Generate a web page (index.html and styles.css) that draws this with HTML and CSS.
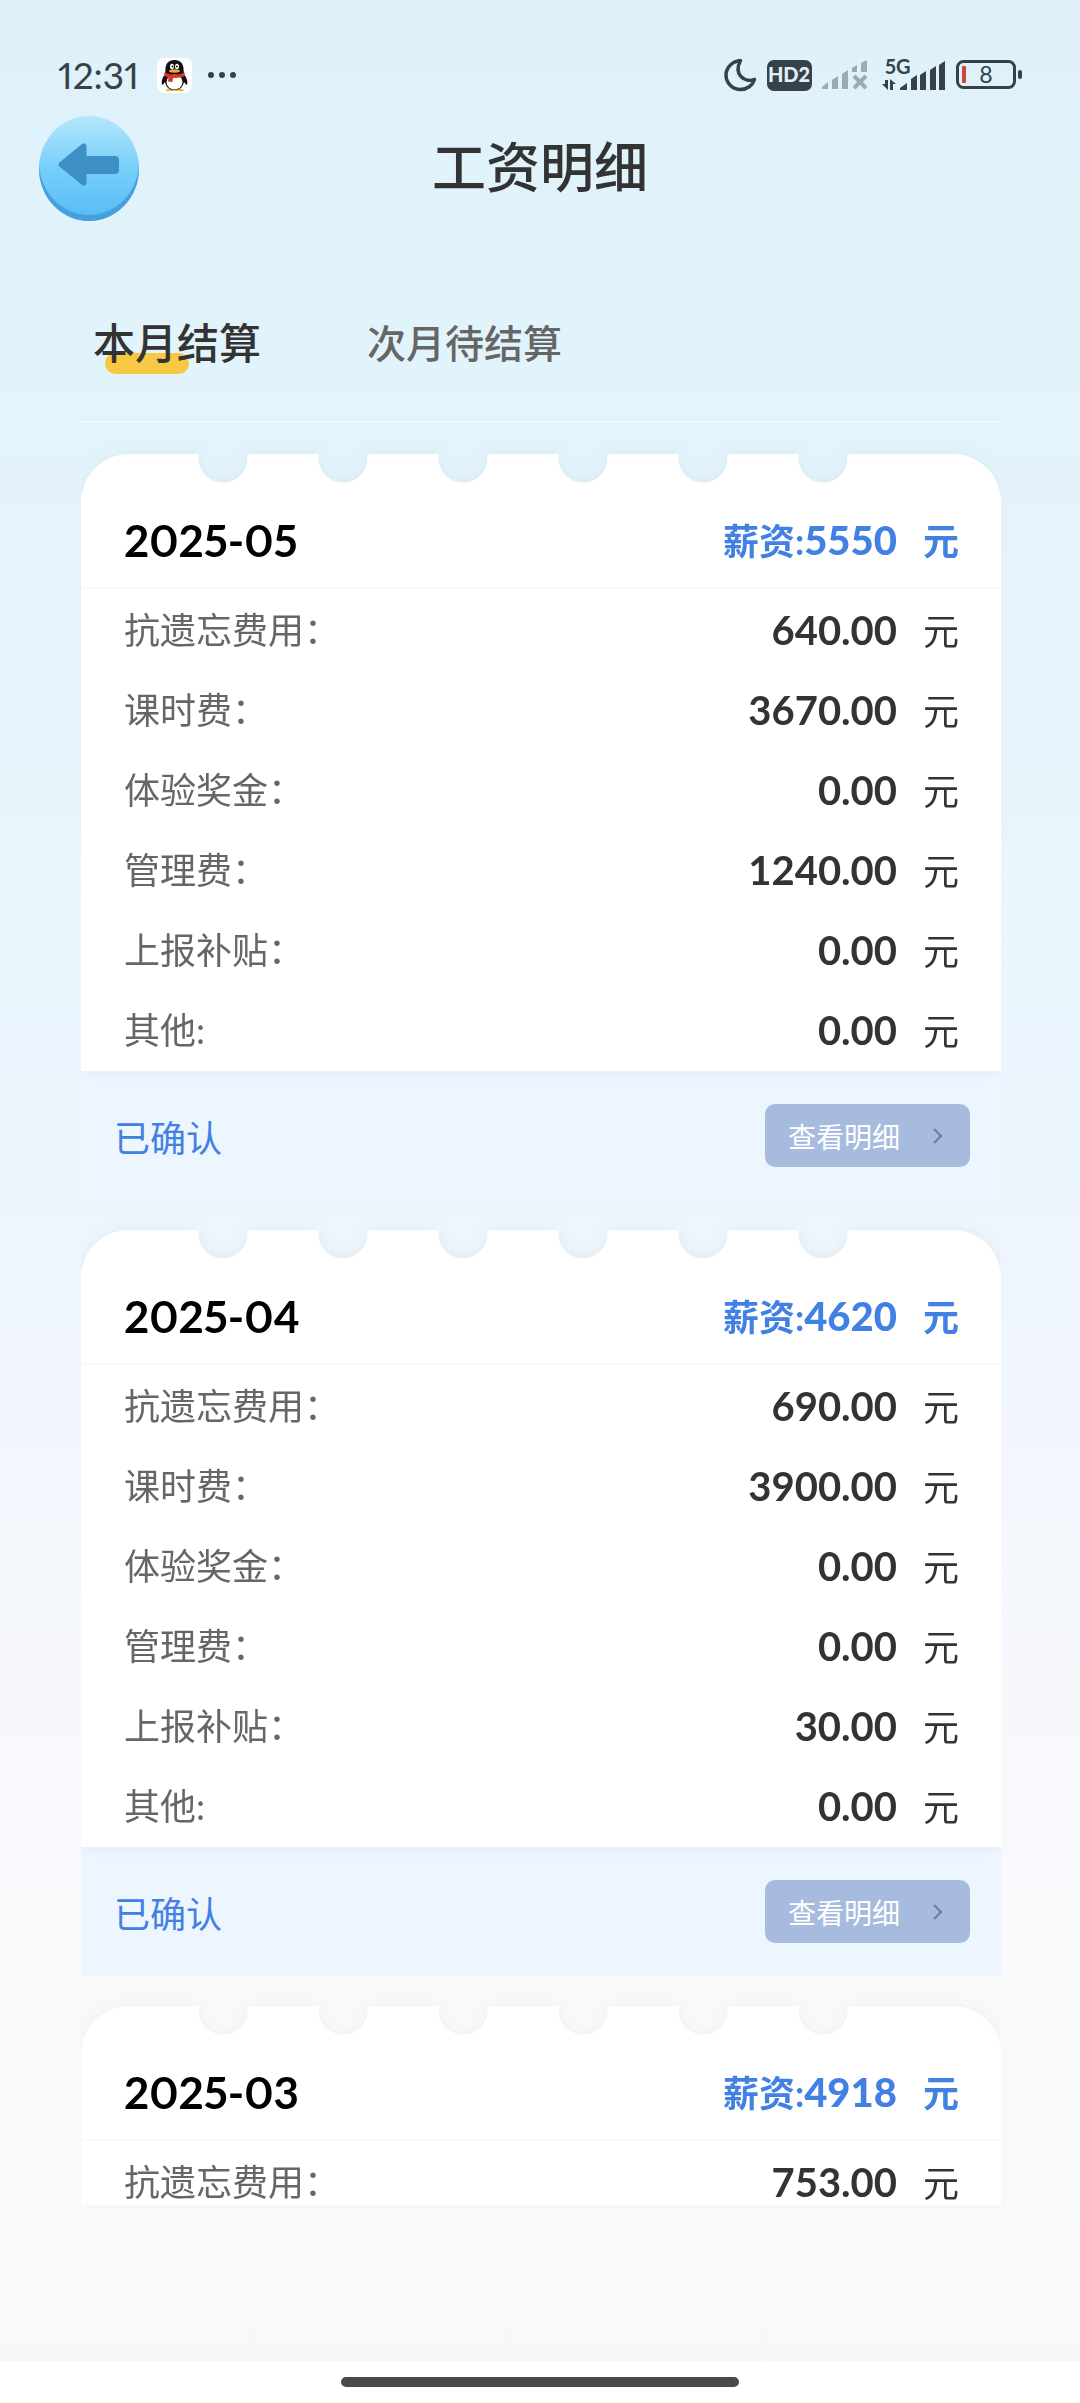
FILE: index.html
```html
<!DOCTYPE html>
<html lang="zh-CN">
<head>
    <meta charset="UTF-8">
    <meta name="viewport" content="width=device-width, initial-scale=1.0">
    <title>工资明细</title>
    <link rel="stylesheet" href="styles.css">
</head>
<body>
    <div class="status-bar">
        <span class="time">12:31</span>
        <svg class="qq" width="35" height="35" viewBox="0 0 35 35">
            <rect width="35" height="35" rx="7" fill="#fff"/>
            <path d="M9 32 Q12 29 17 31 Q22 29 27 32 Q27 34 22 33 H12 Q8 34 9 32Z" fill="#f2b632"/>
            <path d="M17.500 2 C11 2 8.500 6.500 8.500 11 L8 16 C5 20 4 24 5 27 Q6 27 8 24 C9 29 12 32 17.500 32 S26 29 27 24 Q29 27 30 27 C31 24 30 20 27 16 L26.500 11 C26.500 6.500 24 2 17.500 2Z" fill="#111"/>
            <ellipse cx="17.500" cy="24" rx="8" ry="7.500" fill="#fff"/>
            <ellipse cx="15" cy="8.500" rx="2" ry="2.800" fill="#fff"/>
            <ellipse cx="20" cy="8.500" rx="2" ry="2.800" fill="#fff"/>
            <circle cx="15.500" cy="8.500" r="1" fill="#111"/>
            <circle cx="19.800" cy="8.500" r="1" fill="#111"/>
            <ellipse cx="17.500" cy="13" rx="5.500" ry="1.700" fill="#f2a52c"/>
            <path d="M7.500 14.500 Q17.500 19 27.500 14.500 L28 18 Q22 20.500 16 20 L15.500 24 L11 23.500 L11.500 19.500 L7 18Z" fill="#e0322f"/>
        </svg>
        <svg class="more" width="30" height="8" viewBox="0 0 30 8" fill="#364247">
            <circle cx="4" cy="4" r="3"/>
            <circle cx="15" cy="4" r="3"/>
            <circle cx="26" cy="4" r="3"/>
        </svg>
        <div class="status-icons">
            <svg width="34" height="34" viewBox="0 0 34 34" fill="none" stroke="#364247" stroke-width="3.500" stroke-linejoin="round">
                <path d="M17.500 2.500 C10 3 3 9 3 17 C3 25 9.500 31.500 17.500 31.500 C24 31.500 29.500 27.500 31.500 21.500 C22 25 10 17 17.500 2.500Z"/>
            </svg>
            <svg width="45" height="31" viewBox="0 0 45 31">
                <rect width="45" height="31" rx="7" fill="#364247"/>
                <text class="hd-text" x="22" y="22" text-anchor="middle">HD2</text>
            </svg>
            <svg width="46" height="30" viewBox="0 0 46 30" fill="#9cabb2">
                <path d="M0 29 V27 L6 22 V29Z M10 29 V20 L16 16 V29Z M20 29 V14 L26 10 V29Z M30 12 V8 L35 5 V12Z M39 12 V3 L45 0 V12Z"/>
                <path d="M32 16 L44 28 M44 16 L32 28" stroke="#9cabb2" stroke-width="4"/>
            </svg>
            <svg class="signal" width="64" height="48" viewBox="0 -8 64 48" fill="#364247">
                <text class="net-text" x="3" y="15">5G</text>
                <path d="M18 31 V29 L25 24 V31Z M29 31 V20 L35 16 V31Z M38 31 V16 L44 12 V31Z M48 31 V11 L54 7 V31Z M57 31 V6 L63 2 V31Z"/>
                <path d="M0 25 H3 V21 H6 V31Z M14 25 H11 V31 H8 V20Z"/>
            </svg>
            <svg width="66" height="30" viewBox="0 0 66 30">
                <rect x="1.500" y="1.500" width="57" height="26" rx="6" fill="none" stroke="#364247" stroke-width="3"/>
                <rect x="62" y="10" width="4" height="9" rx="2" fill="#364247"/>
                <rect x="6" y="6" width="4" height="17" rx="1" fill="#d0453f"/>
                <text class="battery-text" x="30" y="23" text-anchor="middle">8</text>
            </svg>
        </div>
    </div>

    <header class="nav">
        <button class="back" aria-label="返回">
            <svg width="62" height="46" viewBox="0 0 62 46">
                <path d="M2 20 L24 2 Q28 0 28.500 4 V14 H57 Q61 14 61 18 V28 Q61 32 57 32 H28.500 V41 Q28 45 24 43 L2 25 Q-1 22.500 2 20Z" fill="#3d8fc6"/>
            </svg>
        </button>
        <h1>工资明细</h1>
    </header>

    <nav class="tabs">
        <button class="tab active">本月结算</button>
        <button class="tab">次月待结算</button>
    </nav>

    <main class="list">
        <section class="ticket">
            <div class="paper">
                <div class="edge"><div class="notches"></div></div>
                <div class="head">
                    <h2>2025-05</h2>
                    <p class="total">薪资:<b>5550</b><span class="unit">元</span></p>
                </div>
                <dl class="rows">
                    <div class="row"><dt>抗遗忘费用：</dt><dd><b>640.00</b><span class="unit">元</span></dd></div>
                    <div class="row"><dt>课时费：</dt><dd><b>3670.00</b><span class="unit">元</span></dd></div>
                    <div class="row"><dt>体验奖金：</dt><dd><b>0.00</b><span class="unit">元</span></dd></div>
                    <div class="row"><dt>管理费：</dt><dd><b>1240.00</b><span class="unit">元</span></dd></div>
                    <div class="row"><dt>上报补贴：</dt><dd><b>0.00</b><span class="unit">元</span></dd></div>
                    <div class="row"><dt>其他:</dt><dd><b>0.00</b><span class="unit">元</span></dd></div>
                </dl>
            </div>
            <div class="foot">
                <span class="state">已确认</span>
                <button class="detail">查看明细
                    <svg width="9" height="16" viewBox="0 0 9 16" fill="none" stroke="#6f7f9c" stroke-width="2"><path d="M1 1 L8 8 L1 15"/></svg>
                </button>
            </div>
        </section>

        <section class="ticket">
            <div class="paper">
                <div class="edge"><div class="notches"></div></div>
                <div class="head">
                    <h2>2025-04</h2>
                    <p class="total">薪资:<b>4620</b><span class="unit">元</span></p>
                </div>
                <dl class="rows">
                    <div class="row"><dt>抗遗忘费用：</dt><dd><b>690.00</b><span class="unit">元</span></dd></div>
                    <div class="row"><dt>课时费：</dt><dd><b>3900.00</b><span class="unit">元</span></dd></div>
                    <div class="row"><dt>体验奖金：</dt><dd><b>0.00</b><span class="unit">元</span></dd></div>
                    <div class="row"><dt>管理费：</dt><dd><b>0.00</b><span class="unit">元</span></dd></div>
                    <div class="row"><dt>上报补贴：</dt><dd><b>30.00</b><span class="unit">元</span></dd></div>
                    <div class="row"><dt>其他:</dt><dd><b>0.00</b><span class="unit">元</span></dd></div>
                </dl>
            </div>
            <div class="foot">
                <span class="state">已确认</span>
                <button class="detail">查看明细
                    <svg width="9" height="16" viewBox="0 0 9 16" fill="none" stroke="#6f7f9c" stroke-width="2"><path d="M1 1 L8 8 L1 15"/></svg>
                </button>
            </div>
        </section>

        <section class="ticket">
            <div class="paper">
                <div class="edge"><div class="notches"></div></div>
                <div class="head">
                    <h2>2025-03</h2>
                    <p class="total">薪资:<b>4918</b><span class="unit">元</span></p>
                </div>
                <dl class="rows">
                    <div class="row"><dt>抗遗忘费用：</dt><dd><b>753.00</b><span class="unit">元</span></dd></div>
                </dl>
            </div>
        </section>
    </main>

    <div class="home-bar"><span></span></div>
</body>
</html>
```
FILE: styles.css
```css
* {
    box-sizing: border-box;
}
body {
    display: flex;
    flex-direction: column;
    height: 100vh;
    margin: 0;
    font-family: Lato, "Noto Sans CJK SC", sans-serif;
    font-variant-numeric: proportional-nums;
    color: #333;
    background: linear-gradient(#dff0fa 0, #e1f4fb 14%, #e4f3fb 20%, #e6f5fb 32%, #eaf6f9 38%, #ebf5fd 42%, #eef5fc 52%, #f4f7fd 62%, #f8f9fb 80%, #f8f8fa 100%);
}
h1, h2, p, dl, dd {
    margin: 0;
}
button {
    font-family: inherit;
    padding: 0;
    border: none;
    background: none;
    cursor: pointer;
}

/* status bar */
.status-bar {
    display: flex;
    align-items: center;
    flex: none;
    height: 66px;
    margin-top: 42px;
    padding: 0 58px;
    color: #364247;
}
.time {
    font-size: 37px;
    line-height: 40px;
}
.qq {
    margin-left: 18px;
}
.more {
    margin-left: 15px;
}
.status-icons {
    display: flex;
    align-items: center;
    gap: 10px;
    margin-left: auto;
}
.signal {
    margin-left: 4px;
}
.hd-text {
    font-size: 20px;
    font-weight: 900;
    fill: #e0f0fa;
}
.net-text {
    font-size: 20px;
    font-weight: bold;
}
.battery-text {
    font-size: 23px;
    fill: #364247;
}

/* title */
.nav {
    display: grid;
    grid-template-columns: 100px 1fr 100px;
    align-items: center;
    flex: none;
    height: 120px;
    padding: 0 39px;
}
.back {
    display: flex;
    align-items: center;
    justify-content: center;
    height: 105px;
    padding-bottom: 7px;
    border-radius: 50%;
    background: linear-gradient(#b5e6fc, #76cffa 50%, #56bbf6);
    box-shadow: inset 0 -6px 1px #469fdb;
}
h1 {
    font-size: 54px;
    font-weight: 500;
    line-height: 60px;
    text-align: center;
}

/* tabs */
.tabs {
    display: flex;
    align-items: center;
    gap: 106px;
    flex: none;
    height: 195px;
    margin: 0 79px 0 81px;
    padding: 36px 12px 0;
    border-bottom: 2px solid #edf7fc;
}
.tab {
    font-size: 39px;
    font-weight: 500;
    line-height: 60px;
    color: #666;
}
.tab.active {
    position: relative;
    z-index: 0;
    font-size: 42px;
    color: #333;
}
.tab.active::after {
    content: "";
    position: absolute;
    z-index: -1;
    left: 12px;
    bottom: -1px;
    width: 84px;
    height: 21px;
    border-radius: 11px;
    background: #f6c843;
}

/* salary list */
.list {
    flex: 1;
    min-height: 0;
    margin: 0 79px 156px 81px;
    padding-top: 31px;
    overflow-y: auto;
    scrollbar-width: none;
}
.ticket {
    margin-bottom: 30px;
}
.paper {
    filter: drop-shadow(0 0 7px rgba(0, 50, 50, 0.05));
}
.edge {
    display: flex;
    height: 48px;
}
.edge::before, .edge::after {
    content: "";
    flex: 82;
    background: #fff;
    border-radius: 48px 0 0 0;
}
.edge::after {
    flex: 118;
    border-radius: 0 48px 0 0;
}
.notches {
    width: 720px;
    background: radial-gradient(circle at 60px 4px, transparent 24px, #fff 25px) 0 0 / 120px 100%;
}
.head {
    display: flex;
    justify-content: space-between;
    align-items: center;
    height: 87px;
    padding: 0 42px 10px 43px;
    background: #fff;
    border-bottom: 1px solid #f3f5f6;
}
h2 {
    font-size: 44px;
    line-height: 76px;
    color: #000;
}
.total {
    font-size: 36px;
    font-weight: bold;
    line-height: 76px;
    color: #4380e3;
}
b {
    font-size: 40px;
    font-variant-numeric: tabular-nums;
}
.unit {
    margin-left: 26px;
}
.rows {
    padding: 1px 42px 1px 43px;
    background: #fff;
}
.row {
    display: flex;
    justify-content: space-between;
    font-size: 36px;
    line-height: 80px;
    height: 80px;
}
dt {
    color: #666;
}
.foot {
    display: flex;
    justify-content: space-between;
    align-items: center;
    height: 129px;
    padding: 0 31px 0 33px;
    background: #edf5ff;
}
.state {
    font-size: 36px;
    color: #4380e3;
}
.detail {
    display: flex;
    align-items: center;
    justify-content: space-between;
    width: 205px;
    height: 63px;
    padding: 0 28px 0 23px;
    border-radius: 10px;
    font-size: 28px;
    color: #fff;
    background: #a7bbdf;
}

/* gesture bar */
.home-bar {
    display: flex;
    justify-content: center;
    align-items: center;
    flex: none;
    height: 42px;
    background: #fff;
}
.home-bar span {
    width: 398px;
    height: 10px;
    border-radius: 5px;
    background: #4a4a4a;
}
```
